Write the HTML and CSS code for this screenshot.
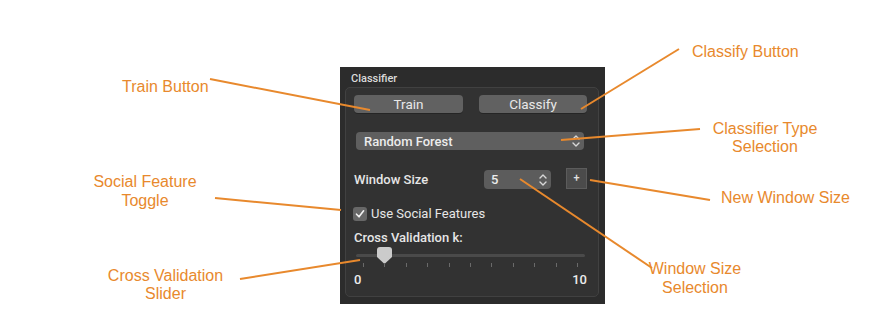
FILE: index.html
```html
<!DOCTYPE html>
<html lang="en">
<head>
    <meta charset="UTF-8">
    <meta name="viewport" content="width=device-width, initial-scale=1.0">
    <title>Classifier</title>
    <link rel="stylesheet" href="styles.css">
</head>
<body>
    <div class="canvas">
        <div class="panel">
            <div class="panel-title">Classifier</div>
            <div class="group">
                <div class="buttons">
                    <button class="btn btn-train">Train</button>
                    <button class="btn btn-classify">Classify</button>
                </div>
                <div class="popup">
                    <span>Random Forest</span>
                    <svg class="updown" width="8" height="12" viewBox="0 0 8 12">
                        <path d="M1 4 L4 1 L7 4 M1 8 L4 11 L7 8" />
                    </svg>
                </div>
                <div class="ws-row">
                    <span class="ws-label">Window Size</span>
                    <div class="stepper">
                        <span>5</span>
                        <svg class="updown" width="8" height="12" viewBox="0 0 8 12">
                            <path d="M1 4 L4 1 L7 4 M1 8 L4 11 L7 8" />
                        </svg>
                    </div>
                    <div class="plus">+</div>
                </div>
                <label class="check">
                    <span class="box">
                        <svg width="10" height="10" viewBox="0 0 10 10">
                            <path d="M1.5 5.2 L4 7.8 L8.6 1.8" />
                        </svg>
                    </span>
                    Use Social Features
                </label>
                <div class="cv-label">Cross Validation k:</div>
                <div class="slider">
                    <div class="track"></div>
                    <svg class="knob" width="15" height="17" viewBox="0 0 15 17">
                        <path d="M3 0 H12 Q15 0 15 3 V10 L7.5 17 L0 10 V3 Q0 0 3 0 Z" />
                    </svg>
                    <div class="ticks" id="ticks"></div>
                </div>
                <div class="range">
                    <span>0</span>
                    <span>10</span>
                </div>
            </div>
        </div>

        <!-- callout lines -->
        <svg class="callouts" width="878" height="324" viewBox="0 0 878 324">
            <line x1="210" y1="79" x2="370" y2="110" />
            <line x1="679" y1="49" x2="581" y2="109" />
            <line x1="700" y1="129" x2="561" y2="140" />
            <line x1="710" y1="200" x2="590" y2="180" />
            <line x1="520" y1="179" x2="652" y2="268" />
            <line x1="215" y1="198" x2="341" y2="210" />
            <line x1="240" y1="279" x2="360" y2="260" />
        </svg>

        <div class="note note-train">Train Button</div>
        <div class="note note-classify">Classify Button</div>
        <div class="note note-type">Classifier Type<br>Selection</div>
        <div class="note note-new">New Window Size</div>
        <div class="note note-ws">Window Size<br>Selection</div>
        <div class="note note-social">Social Feature<br>Toggle</div>
        <div class="note note-cv">Cross Validation<br>Slider</div>
    </div>

    <script>
        // 11 tick marks, 0..10
        const ticks = document.getElementById('ticks');
        for (let i = 0; i <= 10; i++) {
            const t = document.createElement('span');
            ticks.appendChild(t);
        }
    </script>
</body>
</html>
```

FILE: styles.css
```css
* {
    box-sizing: border-box;
}
body {
    margin: 0;
    background: #fff;
    font-family: "Liberation Sans", Arial, sans-serif;
}
.canvas {
    position: relative;
    width: 878px;
    height: 324px;
    overflow: hidden;
    padding: 67px 0 0 340px;
}
.panel {
    width: 265px;
    height: 237px;
    background: #2c2c2c;
    padding: 5px 6px 0 5px;
    color: #e2e2e2;
    font-family: Roboto, "Liberation Sans", sans-serif;
}
.panel-title {
    font-size: 11px;
    font-weight: 500;
    color: #dadada;
    line-height: 13px;
    padding-left: 6px;
    margin-bottom: 2px;
}
.group {
    width: 254px;
    height: 210px;
    border: 1px solid #414141;
    border-radius: 5px;
    background: #323232;
    padding: 7px 11px 0 8px;
}
.buttons {
    display: flex;
    gap: 16px;
}
.btn {
    height: 18px;
    padding: 0;
    border: none;
    border-radius: 4px;
    background: #616161;
    color: #e8e8e8;
    font-family: Roboto, "Liberation Sans", sans-serif;
    font-size: 13.5px;
    line-height: 18px;
    box-shadow: 0 1px 0 rgba(0,0,0,0.25);
}
.btn-train {
    width: 109px;
}
.btn-classify {
    width: 108px;
}
.popup {
    margin: 19px 0 0 2px;
    width: 228px;
    height: 18px;
    border-radius: 4px;
    background: #5f5f5f;
    display: flex;
    align-items: center;
    justify-content: space-between;
    padding: 0 4px 0 8px;
    font-size: 13px;
    font-weight: 500;
    color: #ececec;
}
.updown path {
    fill: none;
    stroke: #d8d8d8;
    stroke-width: 1.4;
    stroke-linecap: round;
    stroke-linejoin: round;
}
.ws-row {
    margin-top: 18px;
    height: 21px;
    display: flex;
    align-items: flex-end;
}
.ws-label {
    flex: 1;
    font-size: 13px;
    font-weight: 500;
    line-height: 19px;
    color: #e6e6e6;
}
.stepper {
    width: 67px;
    height: 19px;
    border-radius: 4px;
    background: #5c5c5c;
    display: flex;
    align-items: center;
    justify-content: space-between;
    padding: 0 4px 0 7px;
    font-size: 13px;
    font-weight: 500;
    color: #ececec;
}
.plus {
    width: 21px;
    height: 21px;
    margin-left: 15px;
    background: #4b4b4b;
    border: 1px solid #5c5c5c;
    color: #e0e0e0;
    font-size: 11px;
    font-weight: 500;
    line-height: 18px;
    text-align: center;
}
.check {
    margin: 18px 0 0 -1px;
    display: flex;
    align-items: center;
    gap: 4px;
    font-size: 13px;
    line-height: 14px;
    color: #e6e6e6;
}
.box {
    width: 14px;
    height: 14px;
    border-radius: 3px;
    background: #676767;
    display: flex;
    align-items: center;
    justify-content: center;
}
.box path {
    fill: none;
    stroke: #f2f2f2;
    stroke-width: 1.6;
    stroke-linecap: round;
    stroke-linejoin: round;
}
.cv-label {
    margin-top: 9px;
    font-size: 13px;
    font-weight: 500;
    line-height: 16px;
    color: #e6e6e6;
}
.slider {
    position: relative;
    height: 26px;
    margin-left: 2px;
    width: 229px;
}
.track {
    position: absolute;
    left: 0;
    right: 0;
    top: 8px;
    height: 3px;
    border-radius: 2px;
    background: #4a4a4a;
}
.knob {
    position: absolute;
    left: 21px;
    top: 1px;
}
.knob path {
    fill: #cbcbcb;
}
.ticks {
    position: absolute;
    left: 7px;
    right: 7px;
    top: 17px;
    display: flex;
    justify-content: space-between;
}
.ticks span {
    width: 1px;
    height: 4px;
    background: #6a6a6a;
}
.range {
    display: flex;
    justify-content: space-between;
    font-size: 13px;
    font-weight: 500;
    line-height: 16px;
    color: #ececec;
}
.callouts {
    position: absolute;
    left: 0;
    top: 0;
    pointer-events: none;
}
.callouts line {
    stroke: #e8892d;
    stroke-width: 2;
}
.note {
    position: absolute;
    color: #e8892d;
    font-size: 16px;
    line-height: 18px;
    text-align: center;
    white-space: nowrap;
}
.note-train {
    left: 122px;
    top: 78px;
}
.note-classify {
    left: 692px;
    top: 43px;
}
.note-type {
    left: 700px;
    width: 130px;
    top: 120px;
}
.note-new {
    left: 721px;
    top: 189px;
}
.note-ws {
    left: 630px;
    width: 130px;
    top: 259px;
    line-height: 19px;
}
.note-social {
    left: 80px;
    width: 130px;
    top: 172px;
    line-height: 19px;
}
.note-cv {
    left: 100px;
    width: 131px;
    top: 267px;
}
```
